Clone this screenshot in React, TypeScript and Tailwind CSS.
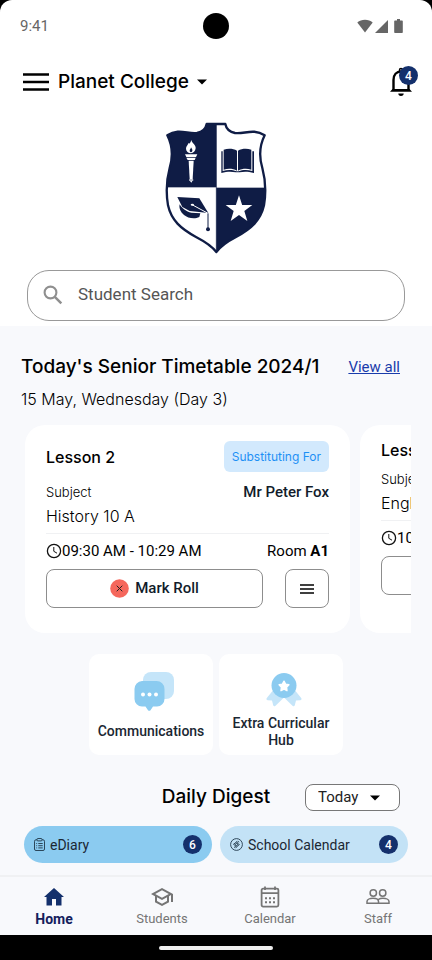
import { useState } from "react"
import type { ReactNode } from "react"

const lessons = [
  {
    id: 1,
    title: "Lesson 2",
    subject: "History 10 A",
    teacher: "Mr Peter Fox",
    time: "09:30 AM - 10:29 AM",
    room: "A1",
    substituting: true,
  },
  {
    id: 2,
    title: "Lesson 3",
    subject: "English 10 B",
    teacher: "",
    time: "10:30 AM - 11:29 AM",
    room: "B2",
    substituting: false,
  },
]

function WifiIcon() {
  return (
    <svg width="16" height="14" viewBox="0 0 16 14" fill="#666">
      <path d="M8 13.500 .3 3.600C2.400 1.700 5 .8 8 .8s5.600.9 7.700 2.800z" />
    </svg>
  )
}

function SignalIcon() {
  return (
    <svg width="13" height="13" viewBox="0 0 13 13" fill="#666">
      <path d="M13 0v13H0z" />
    </svg>
  )
}

function BatteryIcon() {
  return (
    <svg width="9" height="14" viewBox="0 0 9 14" fill="#666">
      <path d="M3 0h3v1.500h2a.8.8 0 0 1 .8.8v10.900a.8.8 0 0 1-.8.8H1a.8.8 0 0 1-.8-.8V2.300a.8.8 0 0 1 .8-.8h2z" />
    </svg>
  )
}

function CaretIcon({ className }: { className?: string }) {
  return (
    <svg width="10" height="6" viewBox="0 0 10 6" fill="#000" className={className}>
      <path d="M0 .5h10L5 5.500z" />
    </svg>
  )
}

function CollegeCrest() {
  return (
    <svg width="102" height="132" viewBox="27 30 306 396" role="img" aria-label="Planet College crest">
      <defs>
        <clipPath id="shield">
          <path d="M152 36H208C211 52 222 60 237 63C265 67 292 48 326 70C310 102 309 135 319 168C329 205 329 250 324 280C314 325 286 350 240 375C213 389 194 403 181 420C168 403 147 389 120 375C74 350 46 325 36 280C31 250 31 205 41 168C51 135 50 102 34 70C68 48 95 67 123 63C138 60 149 52 152 36Z" />
        </clipPath>
      </defs>
      <g clipPath="url(#shield)">
        <rect x="27" y="30" width="306" height="396" fill="#fff" />
        <rect x="27" y="30" width="154" height="196" fill="#0f1c45" />
        <rect x="181" y="227" width="152" height="199" fill="#0f1c45" />
      </g>
      <path
        d="M152 36H208C211 52 222 60 237 63C265 67 292 48 326 70C310 102 309 135 319 168C329 205 329 250 324 280C314 325 286 350 240 375C213 389 194 403 181 420C168 403 147 389 120 375C74 350 46 325 36 280C31 250 31 205 41 168C51 135 50 102 34 70C68 48 95 67 123 63C138 60 149 52 152 36Z"
        fill="none"
        stroke="#0f1c45"
        strokeWidth="7"
        strokeLinejoin="round"
      />
      <path d="M181 38V420" stroke="#0f1c45" strokeWidth="2" />
      {/* torch */}
      <g fill="#fff">
        <path d="M106 84C108 94 120 98 119 109C118 118 112 123 105 124C97 123 90 118 90 110C90 102 96 100 97 93C101 97 103 93 106 84Z" />
        <path d="M87 127H124L120 135H91Z" />
        <path d="M91 137H119L116 144H95Z" />
        <path d="M98 146H113L110 201H101Z" />
        <rect x="99" y="202" width="13" height="4" rx="2" />
        <path d="M102 207H109L106 212Z" />
      </g>
      <path d="M105 106C108 111 111 114 108 119C105 122 101 120 101 116C101 112 105 111 105 106Z" fill="#0f1c45" />
      {/* book */}
      <g fill="#0f1c45">
        <path d="M203 113C217 109 232 110 243 116V176C231 170 217 169 203 173Z" />
        <path d="M286 113C272 109 257 110 246 116V176C258 170 272 169 286 173Z" />
        <path d="M196 118H200V177C216 172 230 173 241 178H248C259 173 274 172 289 177V118H294V183C276 178 263 178 251 181H239C227 178 213 178 196 183Z" />
      </g>
      {/* mortarboard */}
      <g fill="#0f1c45">
        <path d="M64 255L130 259L157 303L101 297L79 285Z" />
        <path d="M71 277C77 288 91 300 106 302L133 304L130 315C115 323 95 318 84 309C74 301 68 288 71 277Z" />
        <circle cx="156" cy="352" r="6" />
      </g>
      <path d="M108 278L156 304" fill="none" stroke="#fff" strokeWidth="3" />
      <path d="M156 304V349" stroke="#0f1c45" strokeWidth="3" />
      <ellipse cx="109" cy="278" rx="5" ry="3" fill="#fff" />
      <path d="M249 250L258.500 279H289L265 297L274 327L249 309L224 327L233 297L209 279H239.500Z" fill="#fff" />
    </svg>
  )
}

function BellIcon() {
  return (
    <svg width="24" height="30" viewBox="0 0 24 30" fill="none">
      <path d="M4.500 23V13C4.500 8 7.500 4.500 12 4.500s7.500 3.500 7.500 8.500V23" stroke="#000" strokeWidth="2.400" />
      <path d="M10.500 4.500V3a1.500 1.500 0 0 1 3 0v1.500" stroke="#000" strokeWidth="1.500" />
      <path d="M3.500 22h17l2.500 2.700H1z" fill="#000" />
      <path d="M9.300 26.500h5.400a2.700 2.400 0 0 1-5.400 0z" fill="#000" />
    </svg>
  )
}

function SearchIcon() {
  return (
    <svg width="20" height="20" viewBox="0 0 20 20" fill="none" stroke="#8f8f8f" strokeWidth="2.100">
      <circle cx="7.500" cy="7.500" r="5.900" />
      <path d="M11.800 11.800 18.300 18.300" strokeWidth="2.500" />
    </svg>
  )
}

function ClockIcon() {
  return (
    <svg width="16" height="16" viewBox="0 0 16 16" fill="none" stroke="#111" strokeWidth="1.300">
      <circle cx="8" cy="8" r="6.600" />
      <path d="M7.800 4v4.300l3.200 1.900" strokeWidth="1" />
    </svg>
  )
}

function MenuIcon() {
  return (
    <svg width="14" height="12" viewBox="0 0 14 12" stroke="#000" strokeWidth="1.300">
      <path d="M0 2h14M0 6h14M0 10h14" />
    </svg>
  )
}

function CrossBadge() {
  return (
    <svg width="19" height="19" viewBox="0 0 19 19">
      <circle cx="9.500" cy="9.500" r="9.300" fill="#f5675c" />
      <path d="M6.700 6.700l5.600 5.600M12.300 6.700l-5.600 5.600" stroke="#222" strokeWidth="1" />
    </svg>
  )
}

function ChatIcon() {
  return (
    <svg width="40" height="40" viewBox="0 0 40 40">
      <rect x="9" y="0" width="31" height="27" rx="8" fill="#c5e5f9" />
      <path
        d="M8 9H22.500a8 8 0 0 1 8 8V27a7.500 7.500 0 0 1-7.500 7.500H19L16.500 38.200a1.500 1.500 0 0 1-2.500 0L11.500 34.500H8A7.500 7.500 0 0 1 .5 27V17A8 8 0 0 1 8 9z"
        fill="#8bcbf0"
      />
      <g fill="#fff">
        <circle cx="9" cy="22.500" r="2" />
        <circle cx="15.500" cy="22.500" r="2" />
        <circle cx="22" cy="22.500" r="2" />
      </g>
    </svg>
  )
}

function RibbonIcon() {
  return (
    <svg width="36" height="34" viewBox="0 0 36 34">
      <path
        d="M6.500 18 .8 25c-.8 1.200-.2 2.200 1 2.200l4.200.3 1.200 4.800c.4 1.200 1.500 1.300 2.300.4L18 24.500l8.500 8.200c.8.900 1.900.8 2.300-.4l1.200-4.800 4.200-.3c1.200 0 1.800-1 1-2.200L29.500 18z"
        fill="#c5e5f9"
      />
      <circle cx="18" cy="12.500" r="12.500" fill="#8bcbf0" />
      <path
        d="M18 8.200l1.600 3 3.300.6-2.300 2.500.4 3.400-3-1.500-3 1.500.4-3.400-2.300-2.500 3.300-.6z"
        fill="#fff"
        stroke="#fff"
        strokeWidth="1.400"
        strokeLinejoin="round"
      />
    </svg>
  )
}

function ClipboardIcon() {
  return (
    <svg width="11" height="13" viewBox="0 0 11 13" fill="none" stroke="#20384a" strokeWidth=".9">
      <path d="M3 1.800H2A1.500 1.500 0 0 0 .5 3.300v7.700A1.500 1.500 0 0 0 2 12.500h7a1.500 1.500 0 0 0 1.500-1.500V3.300A1.500 1.500 0 0 0 9 1.800H8" />
      <rect x="3" y=".5" width="5" height="2.400" rx=".9" />
      <path d="M2.300 5.500h.8M4.300 5.500h4.400M2.300 7.700h.8M4.300 7.700h4.400M2.300 9.900h.8M4.300 9.900h4.400" />
    </svg>
  )
}

function SchoolCalendarIcon() {
  return (
    <svg width="13" height="13" viewBox="0 0 13 13" fill="none" stroke="#20384a" strokeWidth=".9">
      <circle cx="6.500" cy="6.500" r="5.900" />
      <path d="M3.500 6.300 7 3.500l.4 1.800 2 1.200L6 9.500l-.5-1.800zM7.800 3.200l1.400 1M4 8.800l1.300 1" />
      <circle cx="6.500" cy="6.500" r="1" />
    </svg>
  )
}

function HomeIcon() {
  return (
    <svg width="24" height="24" viewBox="0 0 24 24" fill="#14306c">
      <path d="M10 20.500v-6.500h4v6.500h5.500v-8.500H22L12 3 2 12h2.500v8.500z" />
    </svg>
  )
}

function StudentsIcon() {
  return (
    <svg width="24" height="24" viewBox="0 0 24 24" fill="#757575">
      <path d="M12 3 1 9l4 2.180v6L12 21l7-3.820v-6l2-1.090V17h2V9L12 3zm6.820 6L12 12.720 5.180 9 12 5.280 18.820 9zM17 15.990l-5 2.730-5-2.730v-3.720L12 15l5-2.730v3.720z" />
    </svg>
  )
}

function CalendarIcon() {
  return (
    <svg width="24" height="24" viewBox="0 0 24 24" fill="none" stroke="#757575" strokeWidth="1.800">
      <rect x="3.600" y="3.600" width="16.800" height="18" rx="1.500" />
      <path d="M3.600 8.200h16.800M7 1.500v3.500M17 1.500v3.500" />
      <path d="M7 13.200h2M11 13.200h2M15 13.200h2M7 17.200h2M11 17.200h2M15 17.200h2" strokeWidth="2" />
    </svg>
  )
}

function StaffIcon() {
  return (
    <svg width="24" height="24" viewBox="0 0 24 24" fill="none" stroke="#757575" strokeWidth="1.500">
      <circle cx="7.300" cy="8" r="3.200" />
      <circle cx="16.700" cy="8" r="3.200" />
      <path d="M1 18.300v-1.800c0-2 3-3.200 6-3.200s5.500 1.200 5.500 3.200v1.800zM12.500 14.300c1.200-.7 2.800-1 4.400-1 3 0 6.100 1.200 6.100 3.200v1.800H12.500" />
    </svg>
  )
}

function CountBadge({ children, className = "" }: { children: ReactNode; className?: string }) {
  return (
    <span
      className={`flex h-[19px] w-[19px] items-center justify-center rounded-full bg-[#14306c] font-[Roboto,sans-serif] text-xs font-medium text-white ${className}`}
    >
      {children}
    </span>
  )
}

function LessonCard({ lesson }: { lesson: (typeof lessons)[number] }) {
  return (
    <article className="w-[325px] shrink-0 rounded-[20px] bg-white pt-4 pr-[21px] pb-[25px] pl-[21px]">
      <div className="flex items-start justify-between">
        <h3 className={lesson.substituting ? "pt-1 text-base font-medium" : "-mt-[3px] text-base font-medium"}>
          {lesson.title}
        </h3>
        {lesson.substituting && (
          <span className="flex h-[31px] items-center rounded-md bg-[#d2e9fd] px-2 text-xs text-[#1e90f5]">
            Substituting For
          </span>
        )}
      </div>
      <div className={lesson.substituting ? "mt-[10px] flex justify-between" : "mt-[7px] flex justify-between"}>
        <div>
          <p className="text-[13px] leading-5 font-light">Subject</p>
          <p className="mt-[2px] text-base leading-6 font-light">{lesson.subject}</p>
        </div>
        <p className="font-[Roboto,sans-serif] text-[15px] leading-5 font-medium text-[#111c2b]">{lesson.teacher}</p>
      </div>
      <div className="mt-[5px] flex items-center justify-between border-t border-[#f0f1f3] pt-[6px] font-[Roboto,sans-serif] text-[15px] leading-[22px]">
        <p className="flex items-center">
          <ClockIcon />
          {lesson.time}
        </p>
        <p>
          Room <span className="font-bold">{lesson.room}</span>
        </p>
      </div>
      <div className="mt-[7px] flex gap-[22px]">
        <button className="flex h-[39px] flex-1 items-center justify-center gap-[6px] rounded-lg border border-[#8d8d8d] font-[Roboto,sans-serif] text-[15px] font-medium text-[#111c2b]">
          <CrossBadge />
          Mark Roll
        </button>
        <button
          aria-label="Lesson options"
          className="flex h-[39px] w-11 items-center justify-center rounded-lg border border-[#8d8d8d]"
        >
          <MenuIcon />
        </button>
      </div>
    </article>
  )
}

const tabs = [
  { name: "Home", icon: <HomeIcon /> },
  { name: "Students", icon: <StudentsIcon /> },
  { name: "Calendar", icon: <CalendarIcon /> },
  { name: "Staff", icon: <StaffIcon /> },
]

export default function App() {
  const [activeTab, setActiveTab] = useState("Home")
  const [day, setDay] = useState("Today")

  return (
    <div className="flex min-h-screen flex-col bg-black font-[Inter,sans-serif] text-black">
      <header className="rounded-t-xl bg-white pb-[5px]">
        {/* Status bar */}
        <div className="grid h-[52px] grid-cols-3 items-center px-5">
          <span className="font-[Roboto,sans-serif] text-[15px] text-[#666]">9:41</span>
          <span className="h-[26px] w-[26px] justify-self-center rounded-full bg-black" />
          <div className="flex items-center gap-[2px] justify-self-end pr-[9px]">
            <WifiIcon />
            <SignalIcon />
            <span className="ml-1">
              <BatteryIcon />
            </span>
          </div>
        </div>

        <div className="flex h-[60px] items-center pr-[14px] pl-[23px]">
          <button aria-label="Open menu">
            <svg width="26" height="18" viewBox="0 0 26 18" stroke="#000" strokeWidth="2.300">
              <path d="M0 1.500h26M0 9h26M0 16.500h26" />
            </svg>
          </button>
          <button className="ml-[9px] flex items-center text-[19px] font-medium">
            Planet College
            <CaretIcon className="ml-2" />
          </button>
          <button aria-label="Notifications" className="relative ml-auto pr-[5px]">
            <BellIcon />
            <CountBadge className="absolute -top-px right-0">4</CountBadge>
          </button>
        </div>

        <div className="mt-[10px] flex justify-center">
          <CollegeCrest />
        </div>

        <label className="mx-[27px] mt-4 flex h-[51px] items-center rounded-[22px] border border-[#999] px-[15px] pb-[2px]">
          <SearchIcon />
          <input
            type="text"
            aria-label="Student Search"
            placeholder="Student Search"
            className="ml-[15px] min-w-0 flex-1 bg-transparent font-[Roboto,sans-serif] text-[17px] outline-none placeholder:text-[#555]"
          />
        </label>
      </header>

      <main className="flex-1 bg-[#f8f9fc] pb-3">
        <div className="flex items-center justify-between pt-[27px] pr-8 pl-[21px]">
          <h2 className="text-[19px] leading-7 font-medium">Today's Senior Timetable 2024/1</h2>
          <a href="#timetable" className="font-[Roboto,sans-serif] text-[15px] text-[#1a3cab] underline">
            View all
          </a>
        </div>
        <p className="mt-[6px] pl-[21px] text-base leading-6 font-light">15 May, Wednesday (Day 3)</p>

        <div className="mt-[14px] mr-[21px] ml-[25px] flex gap-[10px] overflow-hidden">
          {lessons.map((lesson) => (
            <LessonCard key={lesson.id} lesson={lesson} />
          ))}
        </div>

        <div className="mt-[21px] flex justify-center gap-[6px] font-[Roboto,sans-serif] text-sm leading-[17px] font-medium text-[#1b2733]">
          <button className="flex h-[101px] w-[124px] flex-col items-center rounded-[10px] bg-white pt-[18px]">
            <span className="pl-[6px]">
              <ChatIcon />
            </span>
            <span className="mt-[11px]">Communications</span>
          </button>
          <button className="flex h-[101px] w-[124px] flex-col items-center rounded-[10px] bg-white pt-[19px]">
            <span className="pl-[6px]">
              <RibbonIcon />
            </span>
            <span className="mt-2">
              Extra Curricular
              <br />
              Hub
            </span>
          </button>
        </div>

        <div className="mt-7 grid grid-cols-[1fr_auto_1fr] items-center px-8">
          <h2 className="col-start-2 text-[19px] leading-7 font-medium">Daily Digest</h2>
          <div className="relative justify-self-end">
            <select
              aria-label="Digest day"
              value={day}
              onChange={(e) => setDay(e.target.value)}
              className="h-[27px] w-[95px] appearance-none rounded-lg border border-[#777] bg-white pl-3 font-[Roboto,sans-serif] text-[15px] text-[#222]"
            >
              <option>Today</option>
              <option>Tomorrow</option>
            </select>
            <CaretIcon className="pointer-events-none absolute top-[11px] right-5" />
          </div>
        </div>

        <div className="mt-[15px] flex gap-2 px-6 font-[Roboto,sans-serif] text-sm text-[#1b2733]">
          <button className="flex h-[37px] flex-1 items-center rounded-full bg-[#8bcbf0] px-[10px]">
            <ClipboardIcon />
            <span className="ml-[5px]">eDiary</span>
            <CountBadge className="ml-auto">6</CountBadge>
          </button>
          <button className="flex h-[37px] flex-1 items-center rounded-full bg-[#c3e2f6] px-[10px]">
            <SchoolCalendarIcon />
            <span className="ml-[5px]">School Calendar</span>
            <CountBadge className="ml-auto">4</CountBadge>
          </button>
        </div>
      </main>

      <nav className="grid h-[60px] grid-cols-4 border-t-2 border-[#f0f1f3] bg-[#f8f9fc] font-[Roboto,sans-serif] text-[13px]">
        {tabs.map((tab) => (
          <button
            key={tab.name}
            onClick={() => setActiveTab(tab.name)}
            className={`flex flex-col items-center pt-2 ${
              activeTab === tab.name ? "text-sm font-bold text-[#14205c]" : "text-[#757575]"
            }`}
          >
            {tab.icon}
            <span className="leading-5">{tab.name}</span>
          </button>
        ))}
      </nav>

      <div className="flex h-[25px] items-center justify-center">
        <span className="h-1 w-[114px] rounded-full bg-[#eee]" />
      </div>
    </div>
  )
}
